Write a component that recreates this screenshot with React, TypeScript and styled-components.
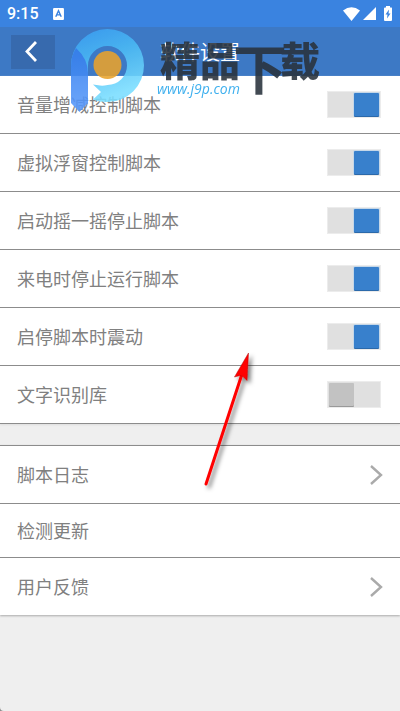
import React from "react";
import styled, { createGlobalStyle } from "styled-components";

const GlobalStyle = createGlobalStyle`
  * { box-sizing: border-box; }
  body {
    margin: 0;
    background: #8c8c8c;
    font-family: "Noto Sans CJK SC", "Noto Sans", sans-serif;
  }
`;

const Page = styled.div`
  position: relative;
  display: flex;
  flex-direction: column;
  min-height: 100vh;
  background: #efefef;
  border-bottom-left-radius: 4px;
  overflow: hidden;
`;

const StatusBar = styled.div`
  display: flex;
  align-items: center;
  gap: 14px;
  height: 27px;
  padding: 0 8px 0 7px;
  background: #3a83e0;
  color: #fff;
`;

const Clock = styled.time`
  font: 500 16px/27px Roboto, sans-serif;
`;

const StatusIcons = styled.div`
  display: flex;
  align-items: center;
  gap: 3px;
  margin-left: auto;
`;

const Battery = styled.svg`
  margin-left: 5px;
`;

const Header = styled.header`
  display: grid;
  grid-template-columns: 44px 1fr 44px;
  align-items: center;
  height: 49px;
  padding: 0 11px;
  background: #3d79c5;
`;

const BackButton = styled.button`
  display: flex;
  align-items: center;
  justify-content: center;
  height: 34px;
  padding: 0 4px 0 0;
  border: 0;
  background: #376aae;
  color: #fff;
`;

const Title = styled.h1`
  margin: 0;
  color: #fff;
  font-size: 20px;
  font-weight: 400;
  line-height: 28px;
  text-align: center;
`;

const Section = styled.section<{ $last?: boolean }>`
  background: #fff;
  margin-bottom: ${(p) => (p.$last ? 0 : 21)}px;
  border-top: ${(p) => (p.$last ? "1px solid #8c8c8c" : "0")};
  box-shadow: 0 1px 2px ${(p) => (p.$last ? "#aaaaaa" : "#dddddd")};
`;

const rowStyles = `
  display: flex;
  align-items: center;
  justify-content: space-between;
  width: 100%;
  padding: 0 17px;
  color: #808080;
  font-size: 18px;
  line-height: 26px;
`;

const RowText = styled.span`
  padding-bottom: 2px;
`;

const SwitchRow = styled.label`
  ${rowStyles}
  height: 58px;
  padding-right: 19px;
  border-bottom: 1px solid #8c8c8c;
`;

const LinkRow = styled.button<{ $compact?: boolean }>`
  ${rowStyles}
  height: ${(p) => (p.$compact ? 54 : 58)}px;
  border: 0;
  border-bottom: 1px solid #8c8c8c;
  background: none;
  font-family: inherit;
  font-weight: 400;
  text-align: left;
  &:last-child { height: 57px; border-bottom: 0; }
`;

const Switch = styled.input`
  appearance: none;
  display: flex;
  width: 54px;
  height: 27px;
  margin: 0;
  padding: 1px;
  border: 1px solid #ececec;
  background: #e0e0e0;
  &::before {
    content: "";
    width: 25px;
    height: 23px;
    border-radius: 1px;
    background: #c2c2c2;
    box-shadow: 0 1px 0 #999;
  }
  &:checked { justify-content: flex-end; }
  &:checked::before { background: #3880cc; box-shadow: 0 1px 0 #2b69aa, 0 0 0 1px #c5d7e8; }
`;

const Watermark = styled.div`
  position: absolute;
  top: 28px;
  left: 70px;
  display: flex;
  pointer-events: none;
  opacity: 0.88;
`;

const Wordmark = styled.div`
  display: flex;
  flex-direction: column;
  margin-left: 11px;
`;

const BrandName = styled.div`
  display: flex;
  height: 50px;
  margin-left: 3px;
  color: #29323c;
  font-size: 40px;
  font-weight: 900;
  line-height: 62px;
  white-space: nowrap;
`;

const TallChar = styled.span`
  margin: 0 -7px;
  padding-top: 8px;
  font-size: 54px;
  font-weight: 700;
`;

const Site = styled.div`
  color: #24a5ec;
  font: italic 500 14px/22px "Open Sans", sans-serif;
`;

const Pointer = styled.svg`
  position: absolute;
  top: 346px;
  left: 198px;
  pointer-events: none;
`;

const toggles = [
  { label: "音量增减控制脚本", on: true },
  { label: "虚拟浮窗控制脚本", on: true },
  { label: "启动摇一摇停止脚本", on: true },
  { label: "来电时停止运行脚本", on: true },
  { label: "启停脚本时震动", on: true },
  { label: "文字识别库", on: false },
];

const Chevron = () => (
  <svg width="13" height="20" viewBox="0 0 13 20" fill="none" stroke="#aaa" strokeWidth="2.4" aria-hidden="true">
    <path d="M1 1 11 10 1 19" />
  </svg>
);

const Logo = () => (
  <svg width="76" height="85" viewBox="70 28 76 85" aria-hidden="true">
    <defs>
      <linearGradient id="ring" x1="0" y1="0" x2="0.35" y2="1">
        <stop offset="0" stopColor="#399cf3" />
        <stop offset="0.45" stopColor="#4abaf5" />
        <stop offset="1" stopColor="#79deff" />
      </linearGradient>
      <linearGradient id="stem" x1="0" y1="0" x2="0" y2="1">
        <stop offset="0" stopColor="#357fed" />
        <stop offset="1" stopColor="#5799fb" />
      </linearGradient>
    </defs>
    <path
      fill="url(#ring)"
      d="M71 66A36.5 36.5 0 1 1 107.5 102Q99 102 93 99.500L101 92 93 84.500 100 85.500Q103 86 107.500 85A19.500 19.500 0 1 0 88 65.500V88L71 66Z"
    />
    <path fill="url(#stem)" d="M71 66Q71 56 76 48Q88 59 88 73V103L79.500 112 71 103Z" />
    <circle cx="107.500" cy="65" r="14" fill="#e9a32c" />
  </svg>
);

export default function App() {
  return (
    <>
      <GlobalStyle />
      <Page>
        <StatusBar>
          <Clock>9:15</Clock>
          <svg width="11" height="12" viewBox="0 0 10 11" aria-hidden="true">
            <rect width="10" height="11" rx="1" fill="#fff" />
            <path d="M2.500 8 5 2.500 7.500 8M3.400 6.300H6.600" fill="none" stroke="#3a83e0" strokeWidth="1.300" />
          </svg>
          <StatusIcons>
            <svg width="17" height="14" viewBox="0 0 17 14" fill="#fff" aria-hidden="true">
              <path d="M0 3.500Q8.500-3 17 3.500L8.500 14Z" />
            </svg>
            <svg width="13" height="13" viewBox="0 0 13 13" fill="#fff" aria-hidden="true">
              <path d="M13 0V13H0Z" />
            </svg>
            <Battery width="8" height="15" viewBox="4 0 8 15" aria-hidden="true">
              <path fill="#fff" d="M6 0h4v1.500h1.500Q12 1.500 12 2.500V14Q12 15 11 15H5Q4 15 4 14V2.500Q4 1.500 5 1.500H6Z" />
              <path fill="#3a83e0" d="M9 3.500 5.500 8.500H7.500L7 12.500 10.500 7.500H8.500Z" />
            </Battery>
          </StatusIcons>
        </StatusBar>
        <Header>
          <BackButton aria-label="返回">
            <svg width="12" height="21" viewBox="0 0 12 21" fill="none" stroke="#fff" strokeWidth="2.800" aria-hidden="true">
              <path d="M11 1 2 10.500 11 20" />
            </svg>
          </BackButton>
          <Title>软件设置</Title>
        </Header>
        <Section>
          {toggles.map((t) => (
            <SwitchRow key={t.label}>
              <RowText>{t.label}</RowText>
              <Switch type="checkbox" role="switch" defaultChecked={t.on} />
            </SwitchRow>
          ))}
        </Section>
        <Section $last>
          <LinkRow><RowText>脚本日志</RowText><Chevron /></LinkRow>
          <LinkRow $compact><RowText>检测更新</RowText></LinkRow>
          <LinkRow><RowText>用户反馈</RowText><Chevron /></LinkRow>
        </Section>
        <Watermark>
          <Logo />
          <Wordmark>
            <BrandName>
              <span>精品</span>
              <TallChar>下</TallChar>
              <span>载</span>
            </BrandName>
            <Site>www.j9p.com</Site>
          </Wordmark>
        </Watermark>
        <Pointer width="62" height="150" viewBox="198 346 62 150" aria-hidden="true">
          <defs>
            <filter id="shade" x="-30%" y="-20%" width="180%" height="150%">
              <feDropShadow dx="3" dy="3" stdDeviation="2" floodColor="#000" floodOpacity="0.5" />
            </filter>
          </defs>
          <g filter="url(#shade)">
            <path d="M206 484 242 374" stroke="#f00" strokeWidth="3" strokeLinecap="round" />
            <path d="M248.500 353 234.500 377 240 375.500 243 376.500 247 380.500Z" fill="#f00" stroke="#b01010" strokeWidth="0.500" />
          </g>
        </Pointer>
      </Page>
    </>
  );
}
